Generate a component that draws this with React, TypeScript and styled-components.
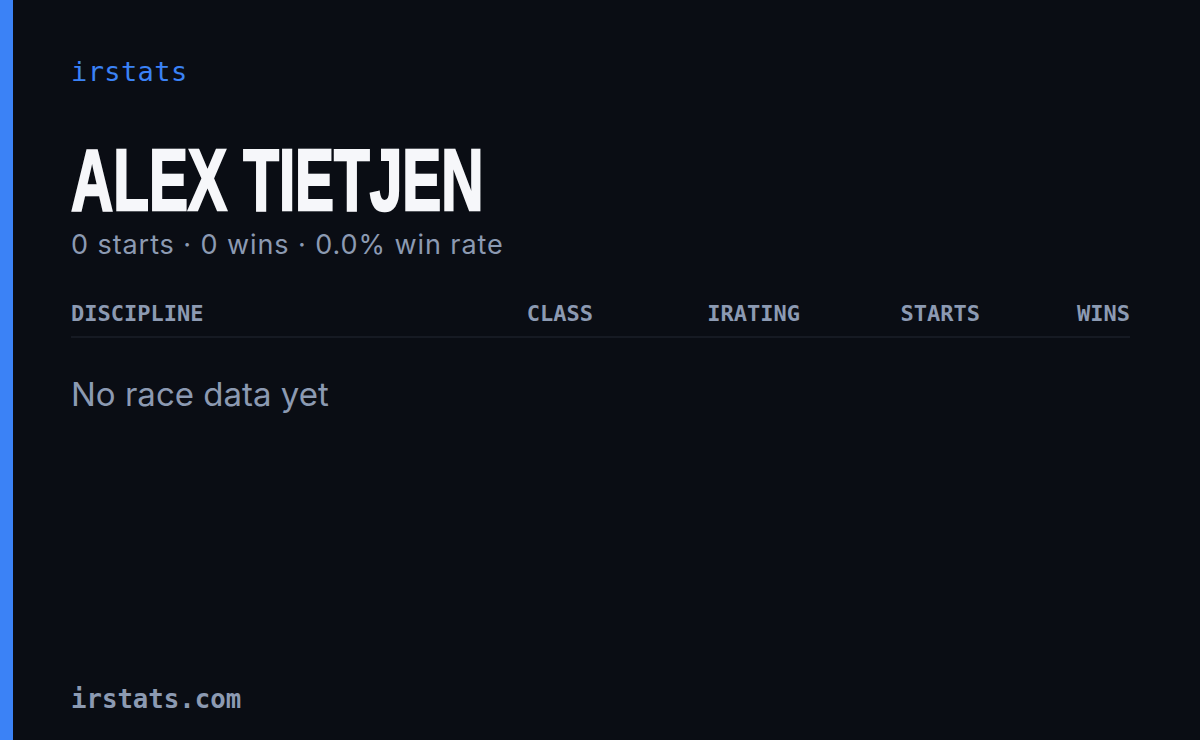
import styled, { createGlobalStyle } from "styled-components";
import * as React from "react";

const GlobalStyle = createGlobalStyle`
  html, body {
    margin: 0;
    padding: 0;
    background: #0a0d14;
  }
`;

const mono = `"DejaVu Sans Mono", "Liberation Mono", monospace`;
const sans = `Inter, "Open Sans", sans-serif`;

type Column = {
  label: string;
  align: "left" | "right";
};

const columns: Column[] = [
  { label: "DISCIPLINE", align: "left" },
  { label: "CLASS", align: "right" },
  { label: "IRATING", align: "right" },
  { label: "STARTS", align: "right" },
  { label: "WINS", align: "right" },
];

const stats = { starts: 0, wins: 0 };

export default function App() {
  const winRate =
    stats.starts > 0 ? ((stats.wins / stats.starts) * 100).toFixed(1) : "0.0";

  return (
    <>
      <GlobalStyle />
      <Card>
        <AccentBar />
        <Main>
          <Brand>irstats</Brand>
          <Name>ALEX TIETJEN</Name>
          <Summary>
            {stats.starts} starts · {stats.wins} wins · {winRate}% win rate
          </Summary>

          <TableHead>
            {columns.map((col) => (
              <HeadCell key={col.label} $align={col.align}>
                {col.label}
              </HeadCell>
            ))}
          </TableHead>

          <Empty>No race data yet</Empty>

          <Footer>irstats.com</Footer>
        </Main>
      </Card>
    </>
  );
}

const Card = styled.div`
  width: 1200px;
  height: 740px;
  display: flex;
  background: #0a0d14;
  overflow: hidden;
`;

const AccentBar = styled.div`
  width: 13px;
  flex-shrink: 0;
  background: #3b82f6;
`;

const Main = styled.div`
  flex: 1;
  display: flex;
  flex-direction: column;
  padding: 56px 70px 26px 58px;
`;

const Brand = styled.div`
  font-family: ${mono};
  font-size: 27px;
  line-height: 32px;
  color: #3b82f6;
  letter-spacing: 0.4px;
`;

// condensed display face isn't available, so squeeze a bold sans and
// thicken the strokes back up a little
const Name = styled.h1`
  margin: 48px 0 0;
  font-family: "Liberation Sans", sans-serif;
  font-weight: 700;
  font-size: 87px;
  line-height: 88px;
  color: #f6f7fa;
  -webkit-text-stroke: 2.5px #f6f7fa;
  transform: scaleX(0.672);
  transform-origin: left center;
  white-space: nowrap;
`;

const Summary = styled.div`
  margin-top: 4px;
  font-family: ${sans};
  font-size: 27px;
  line-height: 34px;
  color: #8c9ab2;
  letter-spacing: 0.92px;
`;

const TableHead = styled.div`
  margin-top: 39px;
  display: grid;
  grid-template-columns: 1fr 140px 207px 180px 150px;
  padding-bottom: 9px;
  border-bottom: 2px solid #161a23;
`;

const HeadCell = styled.div<{ $align: "left" | "right" }>`
  font-family: ${mono};
  font-weight: 700;
  font-size: 22px;
  line-height: 26px;
  color: #8c9ab2;
  text-align: ${(p) => p.$align};
`;

const Empty = styled.div`
  margin-top: 36px;
  font-family: ${sans};
  font-size: 33px;
  line-height: 40px;
  color: #8c9ab2;
`;

const Footer = styled.div`
  margin-top: auto;
  font-family: ${mono};
  font-weight: 700;
  font-size: 25.7px;
  line-height: 30px;
  color: #8c9ab2;
`;
